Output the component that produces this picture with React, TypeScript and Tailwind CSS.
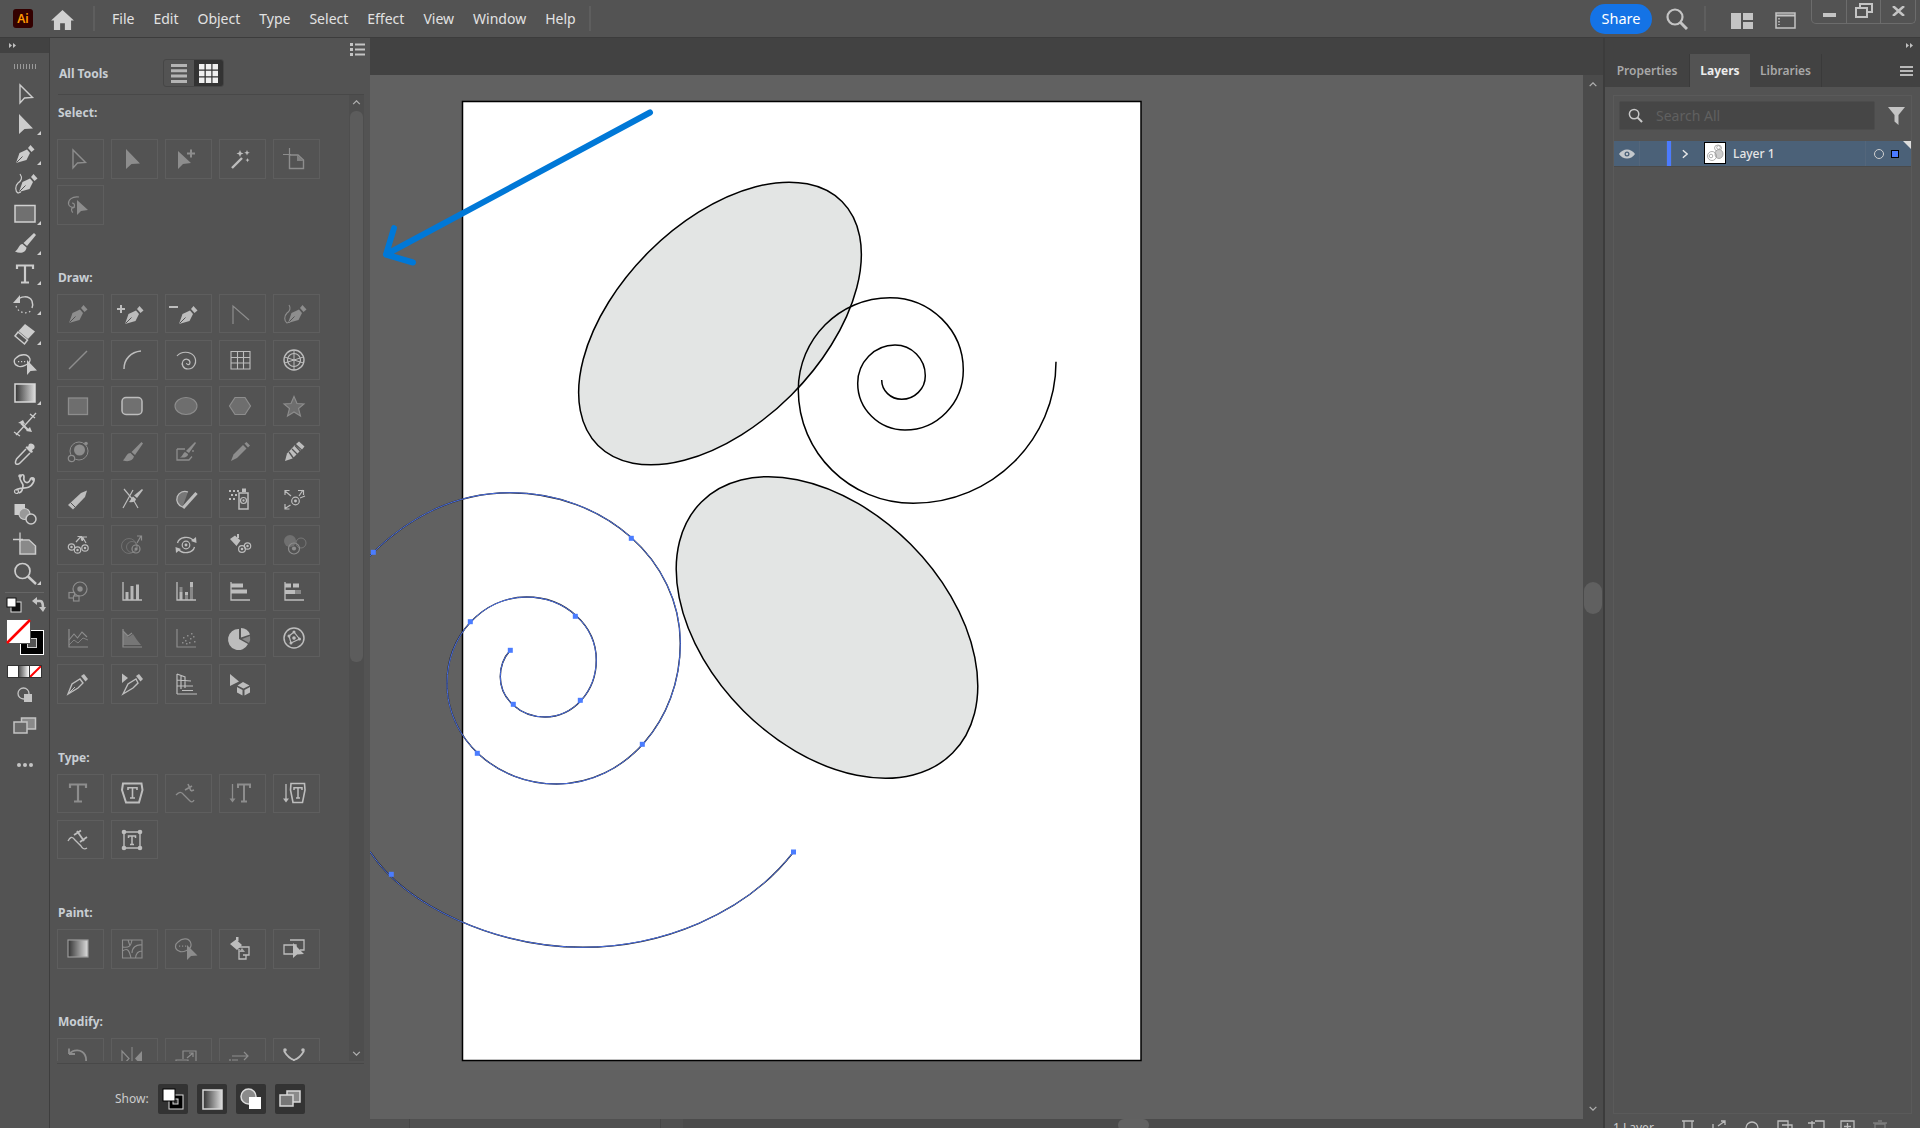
import React from "react";

const L = (d: string, w = 1.5) => <path d={d} fill="none" stroke="currentColor" strokeWidth={w} />;
const F = (d: string, o = 1) => <path d={d} fill="currentColor" opacity={o} />;
const Grad = () => (
  <defs>
    <linearGradient id="gr1" x1="0" x2="1" y1="0" y2="0">
      <stop offset="0" stopColor="#333" />
      <stop offset="1" stopColor="#ddd" />
    </linearGradient>
  </defs>
);
const Nib = (
  <>
    {F("M3 21 L6.5 11 L14 7.5 L17 11 L13.5 18 Z")}
    {F("M15 6 L17.5 3 L21.5 7.5 L18.5 10 Z")}
    <path d="M3.5 20.5 L9.5 14.5" stroke="#535353" strokeWidth="1" />
  </>
);
const Disc = (cx: number, cy: number, r = 3.6) => (
  <>
    <circle cx={cx} cy={cy} r={r} fill="none" stroke="currentColor" strokeWidth="1.2" />
    <circle cx={cx} cy={cy} r={r / 2.6} fill="currentColor" />
  </>
);

const icons: Record<string, React.ReactNode> = {
  arrowO: L("M7 3 V21 L11.5 16 L19.5 15.5 Z", 1.4),
  arrowF: F("M6 2 V22 L11.5 17 L20 16.5 Z"),
  group: (
    <>
      {F("M4 4 V22 L9 17 L17 16 Z")}
      {L("M17 2.5 v8 M13 6.5 h8", 2)}
    </>
  ),
  wand: (
    <>
      {L("M4 21 L14 11", 2.4)}
      {F("M12 3l1 2.5 2.5 1-2.5 1-1 2.5-1-2.5-2.5-1 2.5-1z M19 3l.8 2 2 .8-2 .8-.8 2-.8-2-2-.8 2-.8z M19.5 11l.6 1.5 1.5.6-1.5.6-.6 1.5-.6-1.5-1.5-.6 1.5-.6z")}
    </>
  ),
  crop: (
    <>
      {L("M1 7.5 H9 M7.5 1 V9", 1.2)}
      {L("M7.5 8 H16 L21.5 13 V21.5 H7.5 Z", 1.4)}
      {F("M15 8 L21.5 14 H15Z", 0.8)}
    </>
  ),
  lassoArrow: (
    <>
      {L("M13 4 C6 3 2 7 2.5 11 C3 14 7 15 9 14 M6 10 a2.5 2.5 0 1 1 0 5 C5 17 6 19 7 19.5", 1.2)}
      {F("M11 7 V22 L15 18 L22 17 Z")}
    </>
  ),
  pen: Nib,
  penPlus: (
    <g transform="translate(2 1)">
      {Nib}
      {L("M-1 2 v8 M-5 6 h8", 2)}
    </g>
  ),
  penMinus: (
    <g transform="translate(2 1)">
      {Nib}
      {L("M-7 4 h9", 2)}
    </g>
  ),
  anchor: L("M5 22 V4 L21 18", 1.2),
  curv: (
    <>
      <g transform="translate(3 0)">{Nib}</g>
      {L("M7 3 C9 6 8 9 5 11 C2 14 2 19 5 21 L8 20", 1.1)}
    </>
  ),
  line: L("M3 21 L21 3", 1.5),
  arc: L("M4 21 C4 11 11 4 21 3", 1.5),
  spiral: L("M3 8 C7 3 16 3 20 8 C24 14 20 21 14 21 C9 21 7 16 9 13 C11 10 16 11 16 14.5 C16 17 13 17.5 12.5 15", 1.2),
  grid: L("M3 3.5 H22 V21 H3 Z M3 9.5 H22 M3 15 H22 M9.5 3.5 V21 M15.5 3.5 V21", 1.1),
  polar: (
    <>
      <circle cx="12" cy="12" r="10" fill="none" stroke="currentColor" strokeWidth="1.4" />
      <circle cx="12" cy="12" r="6.5" fill="none" stroke="currentColor" strokeWidth="1.2" />
      {L("M12 2 V22 M2.5 9 L21.5 15 M21.5 9 L2.5 15", 1)}
    </>
  ),
  rect: <rect x="2.5" y="4" width="19" height="16.5" fill="#6e6e6e" stroke="currentColor" strokeWidth="1.3" />,
  rectTool: <rect x="2" y="3.5" width="20" height="16.5" fill="#707070" stroke="#d0d0d0" strokeWidth="1.5" />,
  roundRect: <rect x="2" y="3.5" width="20" height="17" rx="4" fill="#707070" stroke="currentColor" strokeWidth="1.5" />,
  ellipse: <ellipse cx="12" cy="12" rx="11" ry="8.5" fill="#6e6e6e" stroke="currentColor" strokeWidth="1.1" />,
  hex: <path d="M7 3.5 H17 L22.5 12 L17 20.5 H7 L1.5 12 Z" fill="#6e6e6e" stroke="currentColor" strokeWidth="1.2" />,
  star: <path d="M12 2.5 L15 9.5 L22 10 L16.5 14.5 L18.5 22 L12 18 L5.5 22 L7.5 14.5 L2 10 L9 9.5 Z" fill="#6e6e6e" stroke="currentColor" strokeWidth="1.1" />,
  flare: (
    <>
      <circle cx="13.5" cy="10" r="5.5" fill="currentColor" />
      <circle cx="13" cy="11" r="9" fill="none" stroke="currentColor" strokeWidth="1" />
      <circle cx="5.5" cy="18.5" r="3.2" fill="#535353" stroke="currentColor" strokeWidth="1.2" />
      <circle cx="20" cy="3.5" r="1.8" fill="currentColor" />
    </>
  ),
  brush: (
    <>
      {F("M21.5 2 L23 3.5 L15 15 L11.5 12 Z")}
      {F("M10.5 13 C7 13 6.5 16.5 3 20.5 C8 22 13 21 14 16.5 Z")}
    </>
  ),
  shaperBrush: (
    <>
      {L("M3 9 H11 M3 9 V20 H15 L18 16.5 M19 10 V12", 1.3)}
      {F("M21 2 L22 3 L15 13 L12 11 Z")}
      {F("M11 12 C9 13 9 16 6 17.5 C10 18 14 17 14 14 Z")}
    </>
  ),
  pencil: (
    <>
      {F("M15 5 L18.5 8.5 L9 18 L3 21 L5.5 14.5 Z")}
      {F("M16.5 3.5 L18.5 2 L22 5.5 L20 7.5 Z")}
    </>
  ),
  ribbon: (
    <>
      {F("M3 21 L5 13.5 L13 5 L19 10 L10.5 18.5 Z")}
      {F("M14 4 L17 1.5 L22.5 6.5 L20 9.5 Z")}
      <path d="M7 12 L12 19 M10 9 L16 15 M13 5.5 L19 12" stroke="#535353" strokeWidth="1.3" />
    </>
  ),
  blob: (
    <>
      {F("M2 18 L15 6 L21 3.5 L19 10 L7 22.5 Z")}
      <path d="M4.5 15.5 L9.5 20.5" stroke="#535353" strokeWidth="1" />
    </>
  ),
  scissorBrush: (
    <>
      {L("M4 2 L14 14 L18 21 M13 3 L3 21", 1.2)}
      {F("M22 2 L23 3 L17 11 L14 8.5 Z")}
      {F("M13 9.5 C11 11 11 13 9 15 C13 16 16 14 16 12 Z")}
    </>
  ),
  smooth: (
    <>
      <path d="M8.5 20 A8 8 0 1 1 14 5" fill="#777" stroke="currentColor" strokeWidth="1.3" />
      {L("M9 21 L22.5 6", 3.2)}
    </>
  ),
  sprayer: (
    <>
      {F("M14 1.5 H18 V5 H14Z")}
      <path d="M11 6 H20 V22 H11 Z" fill="none" stroke="currentColor" strokeWidth="1.5" />
      {Disc(15.5, 13.5, 3)}
      {F("M1 3h2v2H1z M5 3h2v2H5z M9 3h2v2H9z M3 7h2v2H3z M7 7h2v2H7z M1 11h2v2H1z M5 11h2v2H5z")}
    </>
  ),
  shifter: (
    <>
      {Disc(13.5, 14, 3.8)}
      {L("M9 9 L3 4 M3 8 V3.5 H7.5 M17 9 L21 3 M16 3.5 H21.5 V8 M8.5 18 L3 21.5 M3 17 V22 H7.5 M18 11 L23 9", 1.2)}
    </>
  ),
  scruncher: (
    <>
      {Disc(5.5, 14, 3.2)}
      {Disc(11.5, 17, 3.2)}
      {Disc(19, 15, 3.2)}
      {L("M10 9 L15 3.5 M11.5 3.5 H15.5 V7.5 M20 10 L16.5 4 M21 4 H16.5 V8", 1.2)}
    </>
  ),
  sizer: (
    <>
      <circle cx="9" cy="13" r="7.5" fill="none" stroke="currentColor" strokeWidth="1" opacity="0.5" />
      <circle cx="12" cy="14" r="5.5" fill="none" stroke="currentColor" strokeWidth="1" opacity="0.5" />
      {Disc(16, 16, 4)}
      {L("M17 10 L21 3 M17 3 H21.5 V7.5", 1.2)}
    </>
  ),
  spinner: (
    <>
      {Disc(12, 12, 3.8)}
      {L("M3.5 10 C5 4 15 2 20 8 M20.5 14 C19 20 9 22 4 16", 1.3)}
      {F("M17 8 L22.5 10 L22 4 Z M7 16 L1.5 14 L2 20 Z")}
    </>
  ),
  stainer: (
    <>
      {F("M2 6 L7 2.5 L12.5 7.5 L8.5 13 Z M9 1 H11 V5 H9Z")}
      {Disc(14, 16, 3.4)}
      {Disc(19.5, 13, 3.2)}
    </>
  ),
  screener: (
    <>
      <circle cx="8" cy="8" r="6" fill="currentColor" opacity="0.5" />
      <circle cx="19" cy="10" r="5" fill="none" stroke="currentColor" strokeWidth="1" opacity="0.6" />
      {Disc(12, 15.5, 5.5)}
    </>
  ),
  styler: (
    <>
      {Disc(14, 10, 7)}
      <rect x="3" y="13.5" width="5.5" height="5.5" fill="#535353" stroke="currentColor" strokeWidth="1.2" />
      <rect x="7.5" y="17" width="5.5" height="5" fill="#535353" stroke="currentColor" strokeWidth="1.2" />
    </>
  ),
  barCol: (
    <>
      {L("M3 3 V21 H22", 1.3)}
      {F("M5.5 13h3v8h-3z M10.5 7h3v14h-3z M16 5.5h3v15.5h-3z", 0.95)}
    </>
  ),
  stackCol: (
    <>
      {L("M3 3 V21 H22", 1.3)}
      {F("M5.5 13h3v8h-3z M16 3h3v5h-3z M11 13h3v3h-3z", 0.95)}
      {F("M5.5 8h3v5h-3z M11 16h3v5h-3z M16 8h3v13h-3z", 0.5)}
    </>
  ),
  barH: (
    <>
      {L("M3 3 V21 H22", 1.3)}
      {F("M3 4.5h12v4h-12z M3 10.5h16v4h-16z")}
    </>
  ),
  stackH: (
    <>
      {L("M3 3 V21 H22", 1.3)}
      {F("M3 4.5h6v4h-6z M11 4.5h6v4h-6z M3 11h10v4h-10z")}
      {F("M13 11h6v4h-6z", 0.5)}
    </>
  ),
  lineG: (
    <>
      {L("M3 3 V21 H22", 1.2)}
      {L("M3 14 L8 8 L11.5 12 L16 6 L21 11", 1.1)}
      {L("M3 19 L8 14 L12 17 L17 12 L22 14", 0.8)}
    </>
  ),
  areaG: (
    <>
      {L("M3 3 V21 H22", 1.2)}
      {L("M3 5 L8 10 L12 7", 1.1)}
      {F("M3 16 L3 5 L8.5 11 L13 8 L17 14 L21 19 L3 19 Z", 0.6)}
    </>
  ),
  scatter: (
    <>
      {L("M3 3 V21 H22", 1.2)}
      {F("M8 16h1.5v1.5H8z M11 14h1.5v1.5H11z M13 9h1.5v1.5H13z M9 11h1.5v1.5H9z M16 12h1.5v1.5H16z M15 16h1.5v1.5H15z M19 10h1.5v1.5H19z M20 15h1.5v1.5H20z M12 17h1.5v1.5H12z M17 7h1.5v1.5H17z")}
    </>
  ),
  pie: (
    <>
      {F("M11 3 V13 L20 18 A10.5 10.5 0 1 1 11 3 Z")}
      {F("M13 2 A10 10 0 0 1 22 8.5 L13 11.5 Z")}
      {F("M14 13 L22 10 A10 10 0 0 1 21 17 Z", 0.5)}
    </>
  ),
  radar: (
    <>
      <circle cx="12" cy="12" r="10" fill="none" stroke="currentColor" strokeWidth="1.5" />
      {L("M12 6 L17.5 13 L9 17 L7 10 Z", 1.2)}
      <circle cx="12" cy="6" r="1.5" fill="currentColor" />
      <circle cx="17.5" cy="13" r="1.5" fill="currentColor" />
      <circle cx="9" cy="17" r="1.5" fill="currentColor" />
      <circle cx="7" cy="10" r="1.5" fill="currentColor" />
      <circle cx="12" cy="12" r="1.8" fill="currentColor" />
    </>
  ),
  knife: (
    <>
      {L("M2 22 L6 12 L14 7 L17 11 L12 16 Z", 1.4)}
      {F("M15 4 L18 2 L22 7 L19.5 9.5 Z")}
      {L("M2.5 21.5 L9 15", 1)}
    </>
  ),
  knife2: (
    <>
      <g transform="translate(1 0)">
        {L("M2 22 L7 12 L15 7 L17 11 L12 16 Z", 1.4)}
        {F("M15 4 L18 2 L22 7 L19.5 9.5 Z")}
      </g>
      {F("M2 1.5 V11 L8 6 Z")}
    </>
  ),
  persp: (
    <>
      {L("M3 2 V22 M3 2 L11 5 V16 M3 8 L17 9 M3 14 H19 M7 3.5 V17", 1.2)}
      {L("M3 22 H23 M8 18.5 H19", 1.2)}
    </>
  ),
  perspSel: (
    <>
      {F("M2 2 V14 L11 9.5 Z")}
      {F("M15 10 L21.5 13.5 L15.5 16.5 L9.5 13.5 Z M9 15 L14.5 18 V23.5 L9 20.5 Z M16.5 18 L22 15 V20.5 L16.5 23.5 Z")}
    </>
  ),
  T: L("M4 7 V3.5 H20 V7 M12 3.5 V20.5 M8 20.5 H16", 2.2),
  TArea: (
    <>
      <path d="M3 2.5 H21.5 L22.5 9 L19 21.5 H6 L2 9 Z" fill="none" stroke="currentColor" strokeWidth="2" />
      {L("M8 9 V6.8 H17 V9 M12.5 6.8 V17 M10 17 H15", 1.6)}
    </>
  ),
  TPath: (
    <>
      {L("M2 14 C5 11 7 10 10 14 L16 20 C17 21 19 21.5 20 19", 1.3)}
      {L("M11 9 L18 5 M14 3 L17 10 M20 9 L17 10", 1.6)}
    </>
  ),
  vT: (
    <>
      {L("M10 7 V3.5 H22 V7 M16 3.5 V20.5 M13 20.5 H19", 2)}
      {L("M4.5 3 V19", 1.3)}
      {F("M1.5 17.5 H7.5 L4.5 21.5 Z")}
    </>
  ),
  vTArea: (
    <>
      {L("M9 2.5 H22.5 L23 9 L20.5 21.5 H11 L8.5 9 Z", 1.6)}
      {L("M12 9 V6.8 H20 V9 M16 6.8 V17 M14 17 H18", 1.5)}
      {L("M4 3 V19", 1.3)}
      {F("M1 17.5 H7 L4 21.5 Z")}
    </>
  ),
  vPath: (
    <>
      {L("M2 13 C4 9 6 8 9 12 L15 18 C16 20 18 22 21 20", 1.3)}
      {L("M8 7 L15 2.5 M11 3 L18 13 M14 14 L21 9", 1.8)}
    </>
  ),
  touch: (
    <>
      {L("M4 4 H20 V20 H4 Z", 1.4)}
      <circle cx="4" cy="4" r="2.3" fill="currentColor" />
      <circle cx="20" cy="4" r="2.3" fill="currentColor" />
      <circle cx="4" cy="20" r="2.3" fill="currentColor" />
      <circle cx="20" cy="20" r="2.3" fill="currentColor" />
      {L("M8.5 10 V8 H15.5 V10 M12 8 V16.5 M10 16.5 H14", 1.5)}
    </>
  ),
  gradP: (
    <>
      <Grad />
      <rect x="2" y="3" width="20" height="17" fill="url(#gr1)" stroke="#9a9a9a" strokeWidth="1.2" />
    </>
  ),
  mesh: L("M2.5 3 H22 V21 H2.5 Z M2.5 14 C7 11 9 12 11 21 M12 3 C11 9 9 11 3 10 M22 8 C16 7 12 11 12 16 M22 14 C19 14 16 16 15.5 21 M8 3 L10 9", 1.1),
  shaper: (
    <>
      <path d="M4 5 C9 0 16 1 17 7 C18 13 8 16 5 14 C0 12 1 7 4 5 Z" fill="none" stroke="currentColor" strokeWidth="1.2" />
      {F("M5 8.5h1.2v1.2H5z M8 8.5h1.2v1.2H8z M11 8.5h1.2v1.2H11z")}
      {F("M13 8 V23 L17 19 L23.5 18.5 Z")}
    </>
  ),
  bucket: (
    <>
      {F("M2 7 L8 2.5 L14 8 L9 13 Z M8 0 H10.5 V4 H8Z")}
      {L("M11 10 H21 V18 H15 M11 12 V22 H18 V18", 1.3)}
      {F("M14 11 L17 15 H11Z", 0.8)}
    </>
  ),
  livePaint: (
    <>
      {L("M8 3 H22 V13 H18 M2 8 H14 V17 H2 Z", 1.3)}
      {F("M11 6 V21 L15 17.5 L22 17 Z")}
    </>
  ),
  undoRot: L("M3 8 L3 2.5 M3 8 H9 M3.5 8 C7 3 16 3 19 9 C21 13 20 17 19 20", 1.8),
  reflect: (
    <>
      {L("M2 5 V20 L9 12.5 Z", 1.2)}
      {F("M22 5 V20 L15 12.5 Z")}
      {L("M12 1 V24", 1)}
    </>
  ),
  scale: (
    <>
      {L("M9 13 V5 H22 V17 H16", 1.2)}
      {L("M2 14 H14 V24 H2 Z", 1.2)}
      {L("M13 12 L19 7 M15 7 H19 V11", 1.2)}
    </>
  ),
  shear: (
    <>
      {L("M4 10 H20 M16 6 L20 10 L16 14", 1.2)}
      {L("M2 13 V24 H14 M4 14 H10", 1.2)}
      {F("M10 16 H24 L20 24 H8 Z")}
    </>
  ),
  warp: (
    <>
      {L("M2 5 C5 10 9 13 12 14 C16 13 19 10 22 5", 1.8)}
      <circle cx="3" cy="4" r="1.8" fill="currentColor" />
      <circle cx="21" cy="4" r="1.8" fill="currentColor" />
      {F("M11 13 V24 L15 22 L20 21 Z")}
    </>
  ),
  brushTool: (
    <>
      {F("M21 1 L23 3 L14 14 L10.5 11 Z")}
      {F("M9.5 12 C6 12 6 17 2 19.5 C7 22 13 21 13.5 15.5 Z")}
    </>
  ),
  rotate: (
    <>
      {L("M4 9 C7 4 16 3 19 9 C20 12 20 14 19 16", 1.5)}
      {F("M7 3 V11 H0 Z")}
      <path d="M3 14 C5 21 14 23 19 18" fill="none" stroke="currentColor" strokeWidth="1.2" strokeDasharray="1.5 2.5" />
    </>
  ),
  eraser: (
    <>
      {F("M12 2 L22 9.5 L15 17 L5.5 9 Z")}
      <path d="M5 10 L14.5 18 L11.5 22 L2 14 Z" fill="none" stroke="currentColor" strokeWidth="1.5" />
    </>
  ),
  gradient: (
    <>
      <Grad />
      <rect x="2" y="2" width="20" height="18" fill="url(#gr1)" stroke="#d8d8d8" strokeWidth="1.5" />
    </>
  ),
  width: (
    <>
      {L("M3 23 L23 1", 1.3)}
      {L("M8 11 L15 18", 2.2)}
      {F("M5 11 L10 8 L12 12 Z M13 19 L17 15 L19 20 Z")}
      {L("M1 20 L7 24 M17 2 L22 6", 1.3)}
    </>
  ),
  dropper: (
    <>
      {F("M16 2 C18 0.5 21 2 21.5 4 C22 6 21 7 19 8 L20 10 L18 11 L12.5 5.5 L14 4 L15 5 Z")}
      {L("M13 7 L3.5 17 C2 20 2 21 3 22 C5 23 6 22 7 21 L17 11", 1.5)}
    </>
  ),
  puppet: (
    <>
      {L("M3 18 C8 14 16 19 20 11 C23 6 18 4 17 8 C15 13 10 10 11 5 C11 2 8 2 7 5 C6 8 9 10 10 13 C10 17 9 20 6 21", 1.7)}
      <circle cx="7" cy="4" r="1.8" fill="currentColor" />
      <circle cx="3.5" cy="19.5" r="2" fill="none" stroke="currentColor" strokeWidth="1.2" />
      <circle cx="20" cy="7" r="1.8" fill="currentColor" />
    </>
  ),
  builder: (
    <>
      {F("M1.5 2 H12 V11 H8.5 V13 H1.5 Z")}
      <circle cx="11.5" cy="12" r="5.5" fill="#999" stroke="currentColor" strokeWidth="1.2" />
      <circle cx="18" cy="17" r="5" fill="#535353" stroke="currentColor" strokeWidth="1.5" />
    </>
  ),
  artboard: (
    <>
      {L("M0 7.5 H10 M7 0.5 V10", 1.3)}
      {L("M7 8 H16 L22.5 14 V22 H7 Z", 1.5)}
      {F("M7.5 8.5 H15.5 L22 14.5 V21.5 H7.5 Z", 0.45)}
    </>
  ),
  zoom: (
    <>
      <circle cx="9.5" cy="9" r="7.5" fill="none" stroke="currentColor" strokeWidth="1.7" />
      {L("M15 14.5 L23 22", 2.4)}
    </>
  ),
  shaperB: (
    <>
      <path d="M3 6 C7 2 15 1 17 7 C18 12 8 16 5 14 C1 13 0 8 3 6 Z" fill="none" stroke="currentColor" strokeWidth="1.3" />
      {F("M5 9h1.2v1.2H5z M8 9h1.2v1.2H8z M11 9h1.2v1.2H11z")}
      {F("M14 8 V23 L17.5 19 L24 18.5 Z")}
    </>
  ),
  curvTool: (
    <>
      <g transform="translate(3 -1)">{Nib}</g>
      {L("M7 2 C10 6 8 9 5 11 C2 14 2 19 5 21 L8 20", 1.2)}
    </>
  ),
};

const Ic = ({ n, size = 24 }: { n: string; size?: number }) => (
  <svg viewBox="0 0 24 24" width={size} height={size} className="overflow-visible">
    {icons[n]}
  </svg>
);

const toolbar: [string, boolean][] = [
  ["arrowO", false],
  ["arrowF", true],
  ["pen", true],
  ["curvTool", false],
  ["rectTool", true],
  ["brushTool", true],
  ["T", true],
  ["rotate", true],
  ["eraser", true],
  ["shaperB", false],
  ["gradient", true],
  ["width", false],
  ["dropper", false],
  ["puppet", false],
  ["builder", false],
  ["artboard", false],
  ["zoom", true],
];

type Cell = [string, 0 | 1];
const sections: { label: string; mb: string; after: string; cells: Cell[] }[] = [
  {
    label: "Select:",
    mb: "mb-[17px]",
    after: "mb-[42px]",
    cells: [["arrowO", 0], ["arrowF", 0], ["group", 0], ["wand", 1], ["crop", 0], ["lassoArrow", 0]],
  },
  {
    label: "Draw:",
    mb: "mb-[7px]",
    after: "mb-[43px]",
    cells: [
      ["pen", 0], ["penPlus", 1], ["penMinus", 1], ["anchor", 0], ["curv", 0],
      ["line", 0], ["arc", 1], ["spiral", 1], ["grid", 1], ["polar", 1],
      ["rect", 0], ["roundRect", 1], ["ellipse", 0], ["hex", 0], ["star", 0],
      ["flare", 0], ["brush", 0], ["shaperBrush", 0], ["pencil", 0], ["ribbon", 1],
      ["blob", 1], ["scissorBrush", 1], ["smooth", 1], ["sprayer", 1], ["shifter", 1],
      ["scruncher", 1], ["sizer", 0], ["spinner", 1], ["stainer", 1], ["screener", 0],
      ["styler", 0], ["barCol", 1], ["stackCol", 1], ["barH", 1], ["stackH", 1],
      ["lineG", 0], ["areaG", 0], ["scatter", 0], ["pie", 1], ["radar", 1],
      ["knife", 1], ["knife2", 1], ["persp", 1], ["perspSel", 1],
    ],
  },
  {
    label: "Type:",
    mb: "mb-[7px]",
    after: "mb-[43px]",
    cells: [["T", 0], ["TArea", 1], ["TPath", 0], ["vT", 0], ["vTArea", 1], ["vPath", 1], ["touch", 1]],
  },
  {
    label: "Paint:",
    mb: "mb-[7px]",
    after: "mb-[42px]",
    cells: [["gradP", 0], ["mesh", 0], ["shaper", 0], ["bucket", 1], ["livePaint", 1]],
  },
  {
    label: "Modify:",
    mb: "mb-[7px]",
    after: "mb-[42px]",
    cells: [["undoRot", 0], ["reflect", 0], ["scale", 0], ["shear", 0], ["warp", 1]],
  },
];

const menu = ["File", "Edit", "Object", "Type", "Select", "Effect", "View", "Window", "Help"];

function TopBar() {
  return (
    <div className="flex h-[38px] shrink-0 items-stretch border-b border-[#3c3c3c] bg-[#535353]">
      <div className="ml-[13px] mt-[9px] flex h-[19px] w-[20px] items-center justify-center rounded-[3px] bg-[#330000] text-[12px] font-semibold leading-none text-[#ff9a00]">
        Ai
      </div>
      <svg viewBox="0 0 24 21" className="ml-[18px] mt-[10px] h-[20px] w-[23px]" fill="#d0d0d0">
        <path d="M12 0 L24 11 H21 V21 H14.5 V14 H9.5 V21 H3 V11 H0 Z" />
      </svg>
      <div className="ml-[19px] mt-[6px] h-[25px] w-[2px] bg-[#5e5e5e]" />
      <div className="ml-[17px] flex items-center gap-[19px] pb-[1px] text-[14px] text-[#e2e2e2]">
        {menu.map((m) => (
          <span key={m}>{m}</span>
        ))}
      </div>
      <div className="ml-[13px] mt-[6px] h-[25px] w-[2px] bg-[#5e5e5e]" />
      <div className="ml-auto flex">
        <div className="mt-[4px] flex h-[30px] w-[62px] items-center justify-center rounded-full bg-[#1473e6] text-[14.5px] text-white">
          Share
        </div>
        <svg viewBox="0 0 22 22" className="ml-[14px] mt-[8px] h-[22px] w-[22px]" fill="none" stroke="#c4c4c4">
          <circle cx="9" cy="9" r="7.5" strokeWidth="2.2" />
          <path d="M14.5 14.5 L21 21" strokeWidth="3" />
        </svg>
        <div className="ml-[16px] mt-[6px] h-[25px] w-[2px] bg-[#5e5e5e]" />
        <svg viewBox="0 0 22 16" className="ml-[25px] mt-[13px] h-[16px] w-[22px]" fill="#c4c4c4">
          <path d="M0 0 H10 V16 H0 Z M12 0 H22 V7 H12 Z M12 9 H22 V16 H12 Z" />
        </svg>
        <svg viewBox="0 0 21 17" className="ml-[22px] mt-[12px] h-[17px] w-[21px]" fill="none" stroke="#c4c4c4" strokeWidth="1.5">
          <path d="M1 1 H20 V16 H1 Z" />
          <path d="M1 3.5 H20" strokeWidth="2" />
          <path d="M4 6 V13" strokeWidth="1.5" strokeDasharray="1.5 1.5" />
        </svg>
        <div className="ml-[15px] flex h-[24px] w-[105px] rounded-b-[5px] border border-t-0 border-[#6c6c6c]">
          <div className="flex w-[35px] items-center justify-center border-r border-[#6c6c6c] pt-[6px]">
            <div className="h-[4px] w-[13px] bg-[#c4c4c4]" />
          </div>
          <div className="flex w-[34px] items-center justify-center border-r border-[#6c6c6c]">
            <svg viewBox="0 0 18 15" className="mb-[3px] h-[15px] w-[18px]" fill="none" stroke="#c4c4c4" strokeWidth="2">
              <path d="M5 5 V1 H17 V9 H12 M1 5 H12 V14 H1 Z" />
            </svg>
          </div>
          <div className="flex flex-1 items-center justify-center pb-[2px]">
            <svg viewBox="0 0 13 10" className="h-[10px] w-[13px]" stroke="#c4c4c4" strokeWidth="2.5">
              <path d="M1 0 L12 10 M12 0 L1 10" />
            </svg>
          </div>
        </div>
        <div className="w-[4px]" />
      </div>
    </div>
  );
}

function Tri() {
  return (
    <svg viewBox="0 0 4 4" className="absolute left-[37px] top-[22px] h-[4px] w-[4px]" fill="#cfcfcf">
      <path d="M4 0 V4 H0 Z" />
    </svg>
  );
}

function Toolbar() {
  return (
    <div className="flex w-[50px] shrink-0 flex-col border-r border-[#3e3e3e] bg-[#535353]">
      <div className="flex h-[15px] items-center bg-[#424242] pl-[9px] text-[#c0c0c0]">
        <svg viewBox="0 0 7 5" className="h-[5px] w-[7px]" fill="currentColor">
          <path d="M0 0 L3 2.5 L0 5Z M4 0 L7 2.5 L4 5Z" />
        </svg>
      </div>
      <div className="flex h-[26px] items-center justify-center">
        <div className="h-[5px] w-[22px] bg-[repeating-linear-gradient(90deg,#9a9a9a_0,#9a9a9a_1px,transparent_1px,transparent_3px)]" />
      </div>
      <div className="flex flex-col text-[#cccccc]">
        {toolbar.map(([n, tri], i) => (
          <div key={i} className="relative flex h-[30px] items-center justify-center">
            <Ic n={n} />
            {tri && <Tri />}
          </div>
        ))}
      </div>
      <div className="mx-[5px] mt-[3px] h-px bg-[#666]" />
      <div className="relative mt-[4px] flex h-[18px] pl-[6px] pr-[3px]">
        <svg viewBox="0 0 16 16" className="h-[16px] w-[16px]">
          <rect x="5" y="5" width="10" height="10" fill="#111" stroke="#ddd" strokeWidth="1" />
          <rect x="1" y="1" width="9" height="9" fill="#fff" stroke="#111" strokeWidth="1" />
        </svg>
        <svg viewBox="0 0 14 15" className="ml-[10px] h-[15px] w-[14px]" fill="none" stroke="#c4c4c4" strokeWidth="2.5">
          <path d="M2 4 H8 C11 4 11 8 11 12" />
          <path d="M5 0 L0 4 L5 8 Z M7 10 H14 L11 15 Z" fill="#c4c4c4" stroke="none" />
        </svg>
      </div>
      <div className="relative mt-[4px] h-[38px]">
        <div className="absolute left-[20px] top-[11px] flex h-[25px] w-[24px] items-center justify-center border border-white bg-black">
          <div className="h-[10px] w-[10px] border border-[#cfcfcf] bg-[#555]" />
        </div>
        <svg viewBox="0 0 25 25" className="absolute left-[6px] top-0 h-[25px] w-[25px]">
          <rect x="0.5" y="0.5" width="24" height="24" fill="#fff" stroke="#555" />
          <path d="M1 24 L24 1" stroke="#f00" strokeWidth="2.5" />
        </svg>
      </div>
      <div className="ml-[7px] mt-[7.5px] flex h-[13px] w-[35px] items-center gap-[1px] bg-[#333] px-[1px]">
        <div className="h-[11px] w-[10px] bg-white" />
        <div className="h-[11px] w-[10px] bg-gradient-to-r from-[#555] to-white" />
        <div className="relative h-[11px] flex-1 overflow-hidden bg-white">
          <svg viewBox="0 0 11 11" className="h-[11px] w-[11px]">
            <path d="M0 11 L11 0" stroke="#f00" strokeWidth="2" />
          </svg>
        </div>
      </div>
      <div className="mt-[9.5px] flex justify-center">
        <svg viewBox="0 0 16 16" className="h-[16px] w-[16px]">
          <circle cx="6.5" cy="6.5" r="5.5" fill="#555" stroke="#c4c4c4" strokeWidth="1.3" />
          <rect x="7" y="7" width="8" height="8" fill="#c4c4c4" />
        </svg>
      </div>
      <div className="mt-[14px] flex justify-center">
        <svg viewBox="0 0 24 18" className="h-[18px] w-[24px]" fill="none" stroke="#c4c4c4" strokeWidth="1.5">
          <rect x="8.5" y="1" width="14" height="11" fill="#8a8a8a" />
          <rect x="1" y="5" width="13" height="11" fill="#6a6a6a" />
        </svg>
      </div>
      <div className="mt-[28px] flex justify-center gap-[2px]">
        <div className="h-[4px] w-[4px] rounded-full bg-[#c4c4c4]" />
        <div className="h-[4px] w-[4px] rounded-full bg-[#c4c4c4]" />
        <div className="h-[4px] w-[4px] rounded-full bg-[#c4c4c4]" />
      </div>
    </div>
  );
}

function ToolsPanel() {
  return (
    <div className="flex w-[320px] shrink-0 flex-col bg-[#535353]">
      <div className="relative h-[57px] shrink-0 pl-[8px] pr-[6px]">
        <svg viewBox="0 0 15 13" className="absolute right-[5px] top-[5px] h-[13px] w-[15px]" fill="#c4c4c4">
          <path d="M0 0h3v3H0z M5 0.5h10v2H5z M0 5h3v3H0z M5 5.5h10v2H5z M0 10h3v3H0z M5 10.5h10v2H5z" />
        </svg>
        <div className="flex h-[50px] items-end pb-[1px]">
          <span className="mb-[4px] w-[105px] pl-[1px] text-[12px] font-bold text-[#c8ced4]">All Tools</span>
          <div className="flex h-[28px] w-[61px] overflow-hidden rounded-[3px] border border-[#464646]">
            <div className="flex flex-1 items-center justify-center">
              <svg viewBox="0 0 16 19" className="h-[19px] w-[16px]" fill="#b4b4b4">
                <path d="M0 0h16v3H0z M0 5.3h16v3H0z M0 10.6h16v3H0z M0 16h16v3H0z" />
              </svg>
            </div>
            <div className="flex w-[29px] items-center justify-center bg-[#333]">
              <svg viewBox="0 0 19 19" className="h-[19px] w-[19px]" fill="#f0f0f0">
                <path d="M0 0h5.5v5.5H0z M6.8 0h5.5v5.5H6.8z M13.5 0h5.500v5.500h-5.500z M0 6.8h5.5v5.5H0z M6.8 6.8h5.5v5.5H6.8z M13.5 6.8h5.5v5.5h-5.5z M0 13.5h5.5v5.5H0z M6.8 13.5h5.5v5.5H6.8z M13.5 13.5h5.5v5.5h-5.5z" />
              </svg>
            </div>
          </div>
        </div>
        <div className="mt-[6px] h-px bg-[#484848]" />
      </div>
      <div className="relative ml-[7px] mr-[6px] h-[966px] shrink-0 overflow-hidden">
        <div className="pt-[7px]">
          {sections.map((s) => (
            <div key={s.label} className={s.after}>
              <div className={`h-[20px] pl-[1px] pt-[1px] text-[12px] font-bold leading-[20px] text-[#c8ced4] ${s.mb}`}>{s.label}</div>
              <div className="grid grid-cols-[repeat(5,47px)] auto-rows-[39.5px] gap-x-[7px] gap-y-[6.8px]">
                {s.cells.map(([n, b], i) => (
                  <div
                    key={i}
                    className={`flex items-center justify-center border border-[#5e5e5e] pr-[6px] ${b ? "text-[#bdbdbd]" : "text-[#8d8d8d]"}`}
                  >
                    <Ic n={n} />
                  </div>
                ))}
              </div>
            </div>
          ))}
        </div>
        <div className="absolute bottom-0 right-0 top-0 flex w-[15px] flex-col items-center bg-[#4e4e4e]">
          <svg viewBox="0 0 10 6" className="mt-[5px] h-[5px] w-[9px]" fill="none" stroke="#b0b0b0" strokeWidth="1.5">
            <path d="M1 5 L5 1 L9 5" />
          </svg>
          <div className="mt-[6px] h-[551px] w-[13px] rounded-[6px] bg-[#5c5c5c]" />
          <svg viewBox="0 0 10 6" className="mt-auto mb-[5px] h-[5px] w-[9px]" fill="none" stroke="#b0b0b0" strokeWidth="1.5">
            <path d="M1 1 L5 5 L9 1" />
          </svg>
        </div>
      </div>
      <div className="ml-[7px] mr-[6px] mt-[2px] h-px bg-[#484848]" />
      <div className="flex pl-[65px] pt-[20px]">
        <span className="mr-[9px] flex h-[30px] w-[34px] items-center text-[12px] text-[#cccccc]">Show:</span>
        <div className="flex gap-[9px]">
          <div className="flex h-[30px] w-[30px] items-center justify-center rounded-[2px] bg-[#333]">
            <svg viewBox="0 0 22 22" className="h-[22px] w-[22px]">
              <rect x="7" y="7" width="14" height="14" fill="#000" stroke="#ddd" />
              <rect x="11" y="11" width="5" height="5" fill="#333" stroke="#ddd" />
              <rect x="1" y="1" width="12" height="12" fill="#fff" stroke="#000" />
            </svg>
          </div>
          <div className="flex h-[30px] w-[30px] items-center justify-center rounded-[2px] bg-[#333]">
            <svg viewBox="0 0 21 21" className="h-[21px] w-[21px]">
              <Grad />
              <rect x="1" y="1" width="19" height="19" fill="url(#gr1)" stroke="#d8d8d8" strokeWidth="1.5" />
            </svg>
          </div>
          <div className="flex h-[30px] w-[30px] items-center justify-center rounded-[2px] bg-[#333]">
            <svg viewBox="0 0 22 22" className="h-[22px] w-[22px]">
              <circle cx="8.5" cy="8.5" r="7.5" fill="#8a8a8a" stroke="#dcdcdc" strokeWidth="1.5" />
              <rect x="9" y="9" width="12" height="12" fill="#fff" />
            </svg>
          </div>
          <div className="flex h-[30px] w-[30px] items-center justify-center rounded-[2px] bg-[#333]">
            <svg viewBox="0 0 22 18" className="h-[18px] w-[22px]" stroke="#d8d8d8" strokeWidth="1.5">
              <rect x="8" y="1" width="13" height="11" fill="#8a8a8a" />
              <rect x="1" y="5" width="13" height="11" fill="#777" />
            </svg>
          </div>
        </div>
      </div>
    </div>
  );
}

type P = [number, number];
function spiral(start: P, pts: P[], startVertical: boolean) {
  const k = 0.552;
  let d = `M${start[0]} ${start[1]}`;
  let cur = start;
  let vert = startVertical;
  for (const n of pts) {
    const [cx, cy] = cur;
    const [nx, ny] = n;
    if (vert) {
      d += ` C${cx} ${cy + k * (ny - cy)} ${nx - k * (nx - cx)} ${ny} ${nx} ${ny}`;
    } else {
      d += ` C${cx + k * (nx - cx)} ${cy} ${nx} ${ny - k * (ny - cy)} ${nx} ${ny}`;
    }
    cur = n;
    vert = !vert;
  }
  return d;
}

const blackSpiral = spiral(
  [881.7, 380],
  [[901.7, 399.3], [925.3, 375.7], [895, 345], [857.7, 383.3], [905, 430], [963.3, 370], [890, 297.7], [798.3, 390], [913.3, 503.3], [1056, 361.7]],
  true
);
const blueBase = spiral(
  [500.3, 676.7],
  [[545, 717], [596.3, 660], [526.7, 597], [447, 683.3], [556.7, 784], [680.3, 643.3], [510, 492.7]],
  true
);
const blueSpiral = `M510.3 650.3 C505 656 500.3 665 500.3 676.7 ${blueBase.slice(blueBase.indexOf("C"))} C455 492.7 410 517 373.3 552.3 C320 610 320 800 371 853 C405 905 495 947.3 583 947.3 C660 947.3 745 915 793.5 852`;

const anchors: P[] = [
  [510.3, 650.3], [513.3, 704.3], [580.3, 700.3], [575.3, 616.3], [470.3, 621.7],
  [477.3, 753.3], [642.3, 744.3], [631.3, 538.3], [373.3, 552.3], [391.3, 874.3], [793.5, 852],
];

function Canvas() {
  return (
    <div className="relative min-w-0 flex-1 overflow-hidden bg-[#616161]">
      <svg viewBox="370 75 1213 1044" width="1213" height="1044" className="absolute inset-0 block">
        <rect x="462.5" y="101.5" width="678.5" height="959" fill="#fff" stroke="#000" strokeWidth="1.5" />
        <ellipse cx="720" cy="323.5" rx="172.5" ry="101" transform="rotate(-45 720 323.5)" fill="#e3e5e4" stroke="#000" strokeWidth="1.5" />
        <ellipse cx="827" cy="627.5" rx="177.6" ry="118" transform="rotate(45 827 627.5)" fill="#e3e5e4" stroke="#000" strokeWidth="1.5" />
        <path d={blackSpiral} fill="none" stroke="#000" strokeWidth="1.5" />
        <path d={blueSpiral} fill="none" stroke="#222" strokeWidth="1.4" />
        <path d={blueSpiral} fill="none" stroke="#4a6fe6" strokeWidth="1" />
        {anchors.map(([x, y], i) => (
          <rect key={i} x={x - 2.5} y={y - 2.5} width="5" height="5" fill="#4b7dff" />
        ))}
        <path
          d="M650 112.5 L386 254.5 M394 228 L386 254.5 L413 262.5"
          fill="none"
          stroke="#0078d7"
          strokeWidth="6"
          strokeLinecap="round"
          strokeLinejoin="round"
        />
      </svg>
    </div>
  );
}

function Main() {
  return (
    <div className="flex min-w-0 flex-1 flex-col border-r-2 border-[#3c3c3c] bg-[#424242]">
      <div className="h-[37px] shrink-0 bg-[#424242]" />
      <div className="flex min-h-0 flex-1">
        <Canvas />
        <div className="flex w-[20px] shrink-0 flex-col items-center bg-[#4b4b4b]">
          <svg viewBox="0 0 10 6" className="mt-[7px] h-[5px] w-[10px]" fill="none" stroke="#b0b0b0" strokeWidth="1.5">
            <path d="M1 5 L5 1 L9 5" />
          </svg>
          <div className="mt-[495px] h-[32px] w-[18px] rounded-[9px] bg-[#606060]" />
          <svg viewBox="0 0 10 6" className="mb-[8px] mt-auto h-[5px] w-[10px]" fill="none" stroke="#b0b0b0" strokeWidth="1.5">
            <path d="M1 1 L5 5 L9 1" />
          </svg>
        </div>
      </div>
      <div className="flex h-[9px] shrink-0 bg-[#4b4b4b]">
        <div className="w-[40px] border-r border-[#464646] bg-[#505050]" />
        <div className="w-[251px] border-r border-[#464646] bg-[#505050]" />
        <div className="w-[22px] bg-[#505050]" />
        <div className="ml-[435px] h-[12px] w-[31px] rounded-full bg-[#626262]" />
      </div>
    </div>
  );
}

function RightPanel() {
  return (
    <div className="flex w-[315px] shrink-0 flex-col bg-[#535353]">
      <div className="flex h-[15px] shrink-0 items-center justify-end bg-[#424242] pr-[7px]">
        <svg viewBox="0 0 7 5" className="h-[5px] w-[7px]" fill="#c0c0c0">
          <path d="M0 0 L3 2.5 L0 5Z M4 0 L7 2.5 L4 5Z" />
        </svg>
      </div>
      <div className="flex h-[34px] shrink-0 bg-[#424242] pt-[1px] text-[12px] font-semibold">
        <div className="flex w-[85px] items-center justify-center border-r border-[#3a3a3a] text-[#a8a8a8]">Properties</div>
        <div className="flex w-[60px] items-center justify-center bg-[#535353] font-bold text-[#ececec]">Layers</div>
        <div className="flex w-[72px] items-center justify-center border-r border-[#3a3a3a] text-[#a8a8a8]">Libraries</div>
        <div className="ml-auto mr-[7px] flex w-[13px] flex-col justify-center gap-[2px]">
          <div className="h-[2px] bg-[#b8b8b8]" />
          <div className="h-[2px] bg-[#b8b8b8]" />
          <div className="h-[2px] bg-[#b8b8b8]" />
        </div>
      </div>
      <div className="ml-[8px] mr-[8px] mt-[8px] flex h-[46px] shrink-0 items-start border-x border-t border-[#5a5a5a] pl-[5px] pt-[5px]">
        <div className="flex h-[29px] w-[256px] items-center rounded-[2px] border border-[#4c4c4c] bg-[#464646] pl-[8px]">
          <svg viewBox="0 0 16 16" className="h-[15px] w-[15px]" fill="none" stroke="#c8c8c8">
            <circle cx="6.5" cy="6.5" r="5" strokeWidth="1.6" />
            <path d="M10 10 L15 15" strokeWidth="2.2" />
          </svg>
          <span className="ml-[13px] text-[14px] text-[#606060]">Search All</span>
        </div>
        <svg viewBox="0 0 17 18" className="ml-[13px] mt-[6px] h-[18px] w-[17px]" fill="#c4c4c4">
          <path d="M0 0 H17 L10.5 8 V18 L6.5 14.5 V8 Z" />
        </svg>
      </div>
      <div className="ml-[8px] mr-[8px] flex h-[973px] shrink-0 flex-col border border-t-0 border-[#5a5a5a]">
        <div className="relative flex h-[26px] items-stretch border-b border-[#4a4a4a] bg-[#4b6178]">
          <div className="flex w-[26px] items-center justify-center border-r border-[#53667b]">
            <svg viewBox="0 0 16 10" className="h-[10px] w-[16px]">
              <path d="M0 5 C4 -1 12 -1 16 5 C12 11 4 11 0 5 Z" fill="#c4c8cc" />
              <circle cx="8" cy="5" r="2.5" fill="#4b6178" />
              <circle cx="8" cy="5" r="1.2" fill="#c4c8cc" />
            </svg>
          </div>
          <div className="w-[27px] border-r border-[#53667b]" />
          <div className="w-[4px] bg-[#4b7bff]" />
          <div className="flex w-[33px] items-center border-l border-[#53667b] pl-[10px]">
            <svg viewBox="0 0 7 11" className="h-[10px] w-[6px]" fill="none" stroke="#e8e8e8" strokeWidth="1.6">
              <path d="M1 1 L6 5.5 L1 10" />
            </svg>
          </div>
          <div className="my-[1px] flex h-[22px] w-[22px] items-center justify-center border border-black bg-white">
            <svg viewBox="0 0 20 20" className="h-[20px] w-[20px]" fill="none" stroke="#9a9a9a" strokeWidth="0.8">
              <ellipse cx="13" cy="5" rx="3.5" ry="3" />
              <ellipse cx="14" cy="11" rx="4" ry="4.5" fill="#cccccc" />
              <circle cx="7" cy="13" r="4.5" />
              <circle cx="6" cy="13" r="1.8" />
              <circle cx="13.5" cy="4.5" r="1.8" />
            </svg>
          </div>
          <span className="ml-[7px] flex items-center text-[12px] font-medium text-[#e6e6e6]">Layer 1</span>
          <div className="ml-auto flex w-[46px] items-center border-l border-[#53667b] pl-[8px]">
            <div className="h-[10px] w-[10px] rounded-full border border-[#d0d0d0]" />
            <div className="ml-[7px] flex h-[8px] w-[8px] items-center justify-center border border-black bg-[#4b7bff]" />
          </div>
          <svg viewBox="0 0 8 8" className="absolute right-0 top-0 h-[8px] w-[8px]" fill="#dddddd">
            <path d="M0 0 H8 V8 Z" />
          </svg>
        </div>
      </div>
      <div className="relative flex h-[14px] shrink-0 overflow-hidden pl-[8px] pt-[6px] text-[12px] text-[#cccccc]">
        <span className="leading-[16px]">1 Layer</span>
        <div className="absolute left-[74px] top-[6px] flex gap-[14px] text-[#bdbdbd]">
          {["M3 1 H15 M5 1 V12 M13 1 V12 M3 12 H15", "M2 4 V12 H14 M7 6 L14 1 M10 1 H14 V5", "M3 8 A5 5 0 1 1 15 8", "M3 1 H13 V10 H3 Z M7 5 H17 V14", "M1 3 H8 M5 1 V8 M8 1 H17 V12", "M2 1 H15 V12 H2 Z M8.5 3 V10 M5 6.5 H12", "M4 4 H14 V14 H4 Z M2 3 H16 M7 1 H11"].map(
            (d, i) => (
              <svg key={i} viewBox="0 0 18 14" className={`h-[14px] w-[18px] ${i === 6 ? "opacity-40" : ""}`} fill="none" stroke="currentColor" strokeWidth="1.3">
                <path d={d} />
              </svg>
            )
          )}
        </div>
      </div>
    </div>
  );
}

export default function App() {
  return (
    <div className="flex h-[1128px] w-[1920px] flex-col overflow-hidden bg-[#535353] font-['Noto_Sans','Liberation_Sans',sans-serif]">
      <TopBar />
      <div className="flex min-h-0 flex-1">
        <Toolbar />
        <ToolsPanel />
        <Main />
        <RightPanel />
      </div>
    </div>
  );
}
